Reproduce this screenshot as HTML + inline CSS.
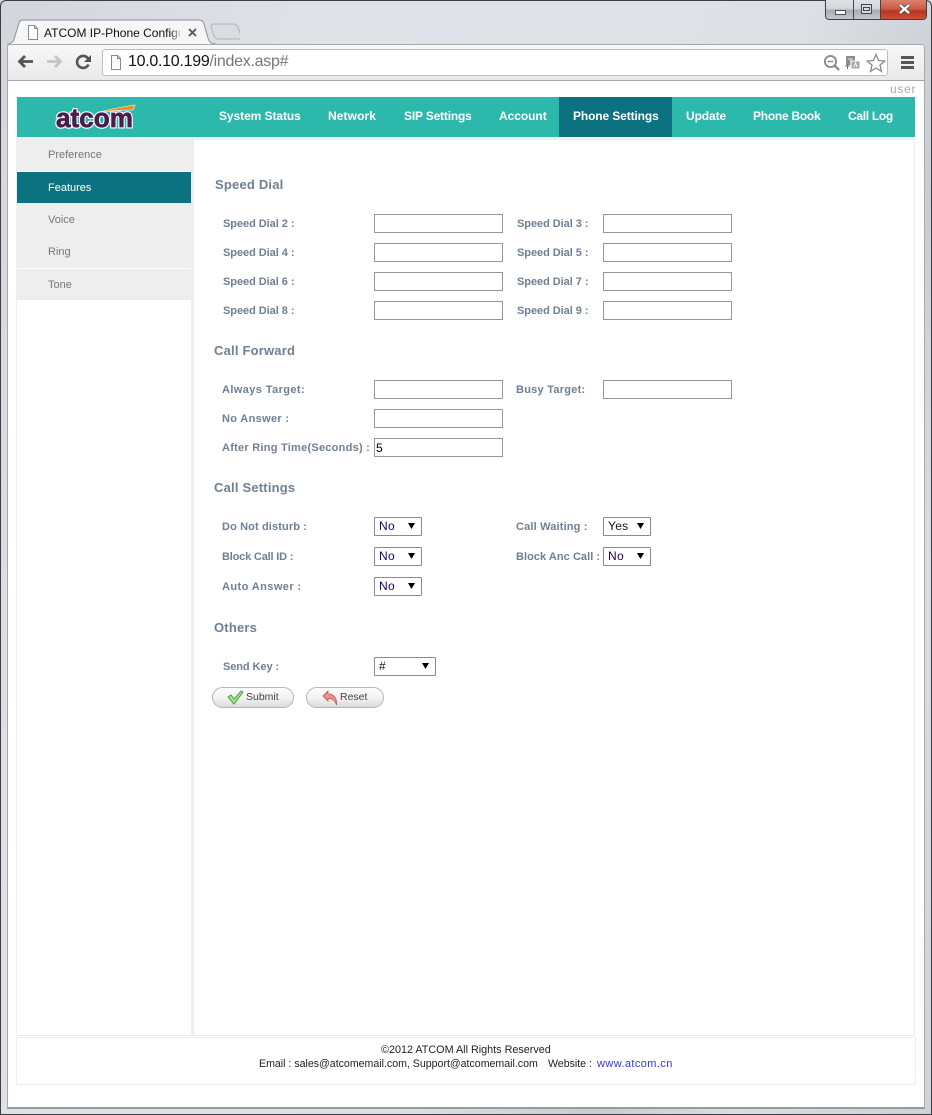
<!DOCTYPE html>
<html><head><meta charset="utf-8"><title>ATCOM IP-Phone Configuration</title>
<style>
*{box-sizing:border-box}
html,body{margin:0;padding:0}
body{width:932px;height:1115px;position:relative;overflow:hidden;font-family:"Liberation Sans",sans-serif;background:#d5d9df}
.a{position:absolute;white-space:nowrap}
.frame{left:0;top:0;width:932px;height:1115px;background:linear-gradient(110deg,#d3d7dc 0,#dfe3e8 25%,#dde1e6 60%,#c9cdd3 75%,#dadee4 85%,#cfd3d8 100%);border:1px solid #3c3f42;border-radius:6px 6px 0 0}
.page{left:7px;top:81px;width:918px;height:1028px;background:#fff;border:1px solid #a8a8a8;border-top:0;border-bottom:2px solid #9a9a9a}
.toolbar{left:7px;top:44px;width:918px;height:37px;background:linear-gradient(#f8f8f8,#e9e9e9);border:1px solid #a6a8aa;border-bottom:1px solid #a5a5a5;border-radius:3px 3px 0 0}
.omni{left:102px;top:49px;width:786px;height:27px;background:#fff;border:1px solid #bdbdbd;border-radius:3px}
.nav{top:109px;font-size:12px;font-weight:bold;color:#fff;line-height:15px}
.side{left:48px;font-size:11px;color:#777;line-height:14px}
.h{font-size:13px;font-weight:bold;color:#6f7f94;line-height:16px;letter-spacing:.2px}
.l{font-size:11px;font-weight:bold;color:#6f7f94;line-height:14px;letter-spacing:.25px}
.sd{letter-spacing:-.05px}
input.i{position:absolute;width:129px;height:19px;border:1px solid #969696;background:#fff;margin:0;padding:0 1px;font:12px "Liberation Sans",sans-serif;color:#000;outline:0}
.s{position:absolute;height:19px;border:1px solid #8a8a8a;border-radius:1px;background:#fff}
.s select{appearance:none;-webkit-appearance:none;border:0;background:transparent;width:100%;height:17px;display:block;padding:0 0 0 4px;margin:0;font:12px/17px "Liberation Sans",sans-serif;color:#200060;letter-spacing:.3px;outline:0}
.s svg{position:absolute;right:6px;top:5px}
.btn{position:absolute;height:21px;border:1px solid #b5b5b5;border-radius:11px;background:linear-gradient(#fdfdfd,#f3f3f3 50%,#dcdcdc);font-size:10.500px;line-height:18px;color:#444}
.btn svg{position:absolute}
.btn span{position:absolute;top:1px}
.ftr{font-size:10.600px;line-height:14px;color:#222}
</style></head>
<body>
<div class="a frame"></div>

<!-- tab -->
<svg class="a" style="left:0;top:17px" width="240" height="28" viewBox="0 0 240 28">
<path d="M7 27 C13 27 14 23 15 19 L19 6 C20 3 21 3 24 3 L199 3 C202 3 203 4 204 7 L208 21 C209 25 212 27 216 27" fill="#f6f6f6" stroke="#8e9093" stroke-width="1"/>
<path d="M211 9 C211 7 212 7 214 7 L234 7 C236 7 237 8 238 10 L241 19 C242 21 241 22 239 22 L219 22 C216 22 215 21 214 19 Z" fill="#d9dde2" stroke="#aeb2b7"/>
</svg>
<svg class="a" style="left:27px;top:25px" width="12" height="15" viewBox="0 0 12 15"><path d="M1.500 .5H7.500L10.500 3.500V14.500H1.500Z" fill="#fff" stroke="#8a8a8a"/><path d="M7.500 .5V3.500H10.500" fill="none" stroke="#8a8a8a"/></svg>
<div class="a" style="left:44px;top:25px;width:136px;overflow:hidden;font-size:12px;line-height:16px;color:#111">ATCOM IP-Phone Configuration</div>
<div class="a" style="left:170px;top:25px;width:12px;height:16px;background:linear-gradient(90deg,rgba(246,246,246,0),#f6f6f6)"></div>
<svg class="a" style="left:188px;top:28px" width="9" height="9" viewBox="0 0 9 9"><path d="M1 1L8 8M8 1L1 8" stroke="#555" stroke-width="1.800"/></svg>

<!-- window controls -->
<div class="a" style="left:825px;top:0;width:102px;height:20px;border:1px solid #3c4046;border-top:0;border-radius:0 0 4px 4px;background:linear-gradient(#dfe2e6,#d2d6da 45%,#a9adb2 55%,#c4c8cc);overflow:hidden">
<div class="a" style="left:27px;top:0;width:1px;height:20px;background:#444"></div>
<div class="a" style="left:54px;top:0;width:1px;height:20px;background:#444"></div>
<div class="a" style="left:55px;top:0;width:47px;height:20px;background:linear-gradient(#d9836f,#cb5a44 45%,#b8341f 55%,#c9553f)"></div>
<div class="a" style="left:9px;top:10px;width:11px;height:5px;background:#fff;border:1px solid #4a4d52"></div>
<div class="a" style="left:35px;top:4px;width:11px;height:10px;border:1px solid #45484c;background:#d5d8dc"><div style="margin:2px 1px;height:4px;border:1px solid #45484c"></div></div>
<svg class="a" style="left:72px;top:3px" width="13" height="12" viewBox="0 0 13 12"><path d="M2 2L11 10M11 2L2 10" stroke="#4a4a4a" stroke-width="4"/><path d="M2 2L11 10M11 2L2 10" stroke="#fff" stroke-width="2.400"/></svg>
</div>

<div class="a toolbar"></div>
<div class="a page"></div>

<!-- toolbar icons -->
<svg class="a" style="left:17px;top:54px" width="17" height="15" viewBox="0 0 17 15"><path d="M8 2L2.500 7.500L8 13M3 7.500H16" fill="none" stroke="#555" stroke-width="2.800"/></svg>
<svg class="a" style="left:46px;top:54px" width="17" height="15" viewBox="0 0 17 15"><path d="M9 2L14.500 7.500L9 13M14 7.500H1" fill="none" stroke="#c4c4c4" stroke-width="2.800"/></svg>
<svg class="a" style="left:75px;top:54px" width="17" height="16" viewBox="0 0 17 16"><path d="M13.500 10.500A6 6 0 1 1 13 4.500" fill="none" stroke="#555" stroke-width="2.600"/><path d="M16 1V8H9Z" fill="#555"/></svg>
<div class="a omni"></div>
<svg class="a" style="left:110px;top:55px" width="12" height="15" viewBox="0 0 12 15"><path d="M1.500 .5H7.500L10.500 3.500V14.500H1.500Z" fill="#fbfbfb" stroke="#8a8a8a"/><path d="M7.500 .5V3.500H10.500" fill="none" stroke="#8a8a8a"/></svg>
<div class="a" style="left:128px;top:52px;font-size:16px;line-height:20px;color:#111;letter-spacing:-.28px">10.0.10.199<span style="color:#777">/index.asp#</span></div>
<svg class="a" style="left:823px;top:54px" width="18" height="17" viewBox="0 0 18 17"><circle cx="7.500" cy="7.500" r="5.600" fill="none" stroke="#8b8b8b" stroke-width="1.900"/><path d="M4.500 7.500H10.500" stroke="#8b8b8b" stroke-width="1.500"/><path d="M11.500 11.500L16 16" stroke="#8b8b8b" stroke-width="2.400"/></svg>
<svg class="a" style="left:845px;top:55px" width="17" height="16" viewBox="0 0 17 16"><rect x="1" y="1" width="9" height="9" fill="#8d8d8d"/><rect x="6" y="6" width="9" height="8" fill="#a9a9a9" stroke="#fff"/><path d="M3 4H8M5.500 4V8" stroke="#ddd"/><path d="M9 12L10.500 8L12 12" fill="none" stroke="#fff"/><path d="M0 11H5M2.500 9V14" stroke="#777"/></svg>
<svg class="a" style="left:866px;top:53px" width="20" height="20" viewBox="0 0 20 20"><path d="M10 1.500L12.500 7.500L18.800 8L14 12L15.500 18.500L10 15L4.500 18.500L6 12L1.200 8L7.500 7.500Z" fill="#fff" stroke="#8b8b8b" stroke-width="1.300"/></svg>
<div class="a" style="left:901px;top:56px;width:13px;height:3px;background:#555"></div>
<div class="a" style="left:901px;top:61px;width:13px;height:3px;background:#555"></div>
<div class="a" style="left:901px;top:66px;width:13px;height:3px;background:#555"></div>

<div class="a" style="left:890px;top:82px;font-size:12px;line-height:14px;color:#aaa;letter-spacing:.7px">user</div>

<!-- header -->
<div class="a" style="left:17px;top:97px;width:898px;height:40px;background:#2cb8ab"></div>
<div class="a" style="left:559px;top:97px;width:113px;height:40px;background:#0c7280"></div>
<svg class="a" style="left:54px;top:103px" width="84" height="28" viewBox="0 0 84 28">
<path d="M45 9C57 6 68 4 81 2L79 7C68 7 56 8 45 9Z" fill="#f08a1d" stroke="#fff" stroke-width=".6"/>
<text x="2" y="24" font-family="Liberation Sans,sans-serif" font-weight="bold" font-size="27" textLength="77" lengthAdjust="spacingAndGlyphs" fill="#4a1d4d" stroke="#fff" stroke-width="3" paint-order="stroke">atcom</text>
<text x="2" y="24" font-family="Liberation Sans,sans-serif" font-weight="bold" font-size="27" textLength="77" lengthAdjust="spacingAndGlyphs" fill="#4a1d4d" stroke="#4a1d4d" stroke-width=".7">atcom</text>
</svg>
<div class="a nav" style="left:219px;letter-spacing:-.07px">System Status</div>
<div class="a nav" style="left:328px;letter-spacing:.1px">Network</div>
<div class="a nav" style="left:404px;letter-spacing:-.18px">SIP Settings</div>
<div class="a nav" style="left:499px;letter-spacing:-.05px">Account</div>
<div class="a nav" style="left:573px;letter-spacing:-.12px">Phone Settings</div>
<div class="a nav" style="left:686px;letter-spacing:-.1px">Update</div>
<div class="a nav" style="left:753px;letter-spacing:-.26px">Phone Book</div>
<div class="a nav" style="left:848px;letter-spacing:-.3px">Call Log</div>

<!-- sidebar -->
<div class="a" style="left:17px;top:137px;width:174px;height:163px;background:#eee"></div>
<div class="a" style="left:17px;top:171px;width:174px;height:1px;background:#fff"></div>
<div class="a" style="left:17px;top:172px;width:174px;height:31px;background:#0c7280"></div>
<div class="a" style="left:17px;top:268px;width:174px;height:1px;background:#fff"></div>
<div class="a" style="left:191px;top:137px;width:3px;height:899px;background:#eee"></div>
<div class="a" style="left:194px;top:137px;width:720px;height:3px;background:#eee"></div>
<div class="a side" style="top:148px">Preference</div>
<div class="a side" style="top:181px;color:#fff">Features</div>
<div class="a side" style="top:213px">Voice</div>
<div class="a side" style="top:245px">Ring</div>
<div class="a side" style="top:278px">Tone</div>

<!-- outlines -->
<div class="a" style="left:16px;top:137px;width:1px;height:899px;background:#eee"></div>
<div class="a" style="left:914px;top:137px;width:1px;height:899px;background:#eee"></div>
<div class="a" style="left:16px;top:1035px;width:899px;height:1px;background:#eee"></div>
<div class="a" style="left:16px;top:1037px;width:900px;height:48px;border:1px solid #eee"></div>

<!-- Speed Dial -->
<div class="a h" style="left:215px;top:177px">Speed Dial</div>
<div class="a l sd" style="left:223px;top:217px">Speed Dial 2 :</div><input class="i" style="left:374px;top:214px">
<div class="a l sd" style="left:517px;top:217px">Speed Dial 3 :</div><input class="i" style="left:603px;top:214px">
<div class="a l sd" style="left:223px;top:246px">Speed Dial 4 :</div><input class="i" style="left:374px;top:243px">
<div class="a l sd" style="left:517px;top:246px">Speed Dial 5 :</div><input class="i" style="left:603px;top:243px">
<div class="a l sd" style="left:223px;top:275px">Speed Dial 6 :</div><input class="i" style="left:374px;top:272px">
<div class="a l sd" style="left:517px;top:275px">Speed Dial 7 :</div><input class="i" style="left:603px;top:272px">
<div class="a l sd" style="left:223px;top:304px">Speed Dial 8 :</div><input class="i" style="left:374px;top:301px">
<div class="a l sd" style="left:517px;top:304px">Speed Dial 9 :</div><input class="i" style="left:603px;top:301px">

<!-- Call Forward -->
<div class="a h" style="left:214px;top:343px">Call Forward</div>
<div class="a l" style="left:222px;top:383px;letter-spacing:.4px">Always Target:</div><input class="i" style="left:374px;top:380px">
<div class="a l" style="left:516px;top:383px">Busy Target:</div><input class="i" style="left:603px;top:380px">
<div class="a l" style="left:222px;top:412px;letter-spacing:.33px">No Answer :</div><input class="i" style="left:374px;top:409px">
<div class="a l" style="left:222px;top:441px">After Ring Time(Seconds) :</div><input class="i" style="left:374px;top:438px" value="5">

<!-- Call Settings -->
<div class="a h" style="left:214px;top:480px">Call Settings</div>
<div class="a l" style="left:222px;top:520px;letter-spacing:.12px">Do Not disturb :</div>
<div class="s" style="left:374px;top:517px;width:48px"><select><option>No</option></select><svg width="7" height="6" viewBox="0 0 7 6"><path d="M0 0H7L3.500 6Z" fill="#000"/></svg></div>
<div class="a l" style="left:516px;top:520px;letter-spacing:.17px">Call Waiting :</div>
<div class="s" style="left:603px;top:517px;width:48px"><select style="color:#111"><option>Yes</option></select><svg width="7" height="6" viewBox="0 0 7 6"><path d="M0 0H7L3.500 6Z" fill="#000"/></svg></div>
<div class="a l" style="left:222px;top:550px;letter-spacing:-.18px">Block Call ID :</div>
<div class="s" style="left:374px;top:547px;width:48px"><select><option>No</option></select><svg width="7" height="6" viewBox="0 0 7 6"><path d="M0 0H7L3.500 6Z" fill="#000"/></svg></div>
<div class="a l" style="left:516px;top:550px;letter-spacing:.05px">Block Anc Call :</div>
<div class="s" style="left:603px;top:547px;width:48px"><select><option>No</option></select><svg width="7" height="6" viewBox="0 0 7 6"><path d="M0 0H7L3.500 6Z" fill="#000"/></svg></div>
<div class="a l" style="left:222px;top:580px;letter-spacing:.42px">Auto Answer :</div>
<div class="s" style="left:374px;top:577px;width:48px"><select><option>No</option></select><svg width="7" height="6" viewBox="0 0 7 6"><path d="M0 0H7L3.500 6Z" fill="#000"/></svg></div>

<!-- Others -->
<div class="a h" style="left:214px;top:620px">Others</div>
<div class="a l" style="left:223px;top:660px;letter-spacing:-.08px">Send Key :</div>
<div class="s" style="left:374px;top:657px;width:62px"><select style="color:#111"><option>#</option></select><svg width="7" height="6" viewBox="0 0 7 6"><path d="M0 0H7L3.500 6Z" fill="#000"/></svg></div>

<div class="btn" style="left:212px;top:687px;width:82px">
<svg style="left:14px;top:2px" width="17" height="15" viewBox="0 0 17 15"><path d="M1 7L4 5L7 9L14 1L16 2L7 14Z" fill="#a5e08a" stroke="#3f9a3a" stroke-width=".9"/></svg>
<span style="left:33px;top:0">Submit</span></div>
<div class="btn" style="left:306px;top:687px;width:78px">
<svg style="left:15px;top:2px" width="16" height="16" viewBox="0 0 16 16"><path d="M6 1V4C11 4 15 7 14.500 15C13 10 10 8.500 6 8.500V11L1 6Z" fill="#e9938c" stroke="#b5544e" stroke-width=".8"/></svg>
<span style="left:33px;top:0">Reset</span></div>

<!-- footer -->
<div class="a ftr" style="left:381px;top:1043px;font-size:10.800px">©2012 ATCOM All Rights Reserved</div>
<div class="a ftr" style="left:259px;top:1057px">Email : sales@atcomemail.com, Support@atcomemail.com</div>
<div class="a ftr" style="left:548px;top:1057px">Website :</div>
<div class="a ftr" style="left:597px;top:1057px;font-size:11px;color:#3535d8;letter-spacing:.4px">www.atcom.cn</div>
</body></html>
